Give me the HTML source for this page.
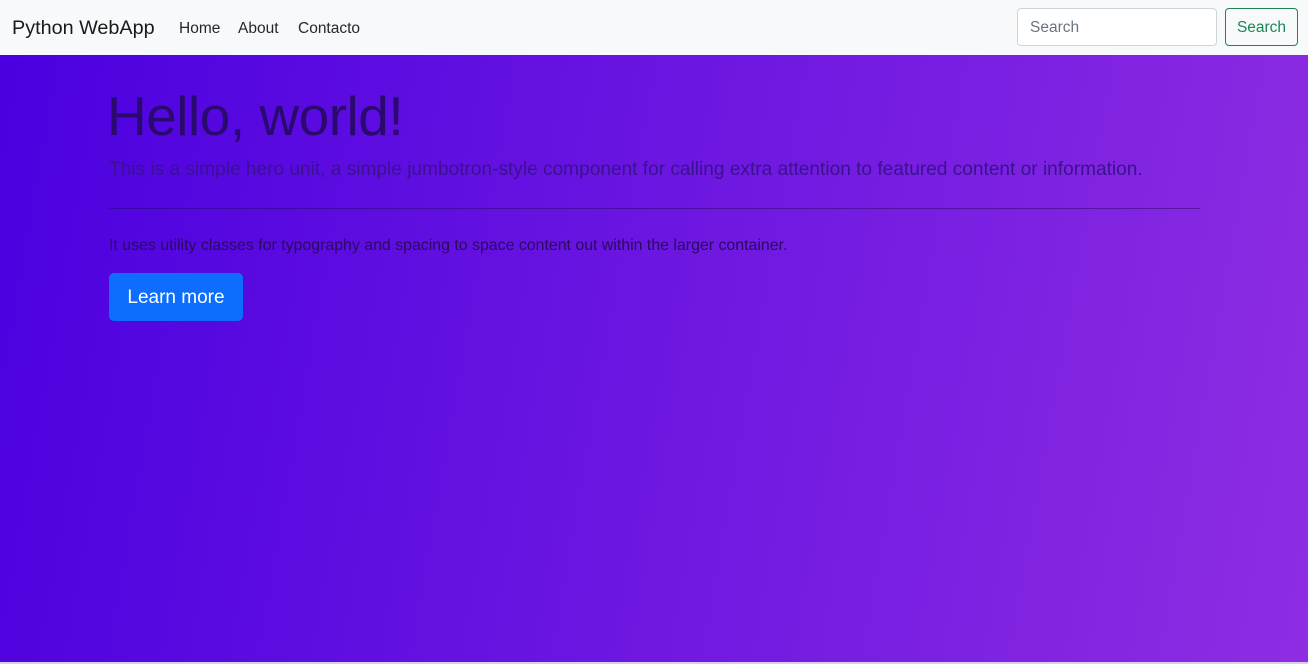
<!DOCTYPE html>
<html><head><style>
*{margin:0;padding:0;box-sizing:border-box}
body{width:1308px;height:664px;overflow:hidden;font-family:"Liberation Sans",sans-serif;background:#fff}
nav{height:55px;background:#f8f9fa;position:relative}
.brand{position:absolute;left:12px;top:17px;font-size:19.8px;color:rgba(0,0,0,.9)}
.links{position:absolute;top:20px;font-size:15.5px;color:rgba(0,0,0,.85)}
.links span{position:absolute;white-space:nowrap}
.search{position:absolute;left:1017px;top:8px;width:200px;height:38px;border:1px solid #ced4da;border-radius:4px;background:#fff;font-size:15.5px;color:#6c757d;padding:10px 12px}
.btn{position:absolute;left:1225px;top:8px;width:73px;height:38px;border:1px solid #198754;border-radius:4px;color:#198754;font-size:15.5px;padding:10px 0;text-align:center}
.hero{position:absolute;top:55px;left:0;width:1308px;height:607px;background:linear-gradient(100deg,#4a00e0,#8e2de2)}
h1{position:absolute;left:107px;top:29px;font-weight:300;font-size:55px;color:#2a0a6e;letter-spacing:-0.5px}
.lead{position:absolute;left:109px;top:104px;font-size:19.1px;color:#3a128e;white-space:nowrap}
hr{position:absolute;left:109px;top:153px;width:1091px;border:0;border-top:1px solid rgba(40,10,100,.5)}
.p{position:absolute;left:109px;top:182px;font-size:15.9px;color:#2a0a5e;white-space:nowrap}
.lm{position:absolute;left:109px;top:218px;width:134px;height:48px;background:#0d6efd;border-radius:5px;color:#fff;font-size:19px;text-align:center;padding-top:14px}
.bot{position:absolute;top:662px;left:0;width:1308px;height:2px;background:#d8d0e8}
</style></head><body>
<nav><div class="brand">Python WebApp</div>
<div class="links"><span style="left:179px">Home</span><span style="left:238px">About</span><span style="left:298px">Contacto</span></div>
<div class="search">Search</div><div class="btn">Search</div></nav>
<div class="hero">
<h1>Hello, world!</h1>
<div class="lead">This is a simple hero unit, a simple jumbotron-style component for calling extra attention to featured content or information.</div>
<hr>
<div class="p">It uses utility classes for typography and spacing to space content out within the larger container.</div>
<div class="lm">Learn more</div>
</div>
<div class="bot"></div>
</body></html>
